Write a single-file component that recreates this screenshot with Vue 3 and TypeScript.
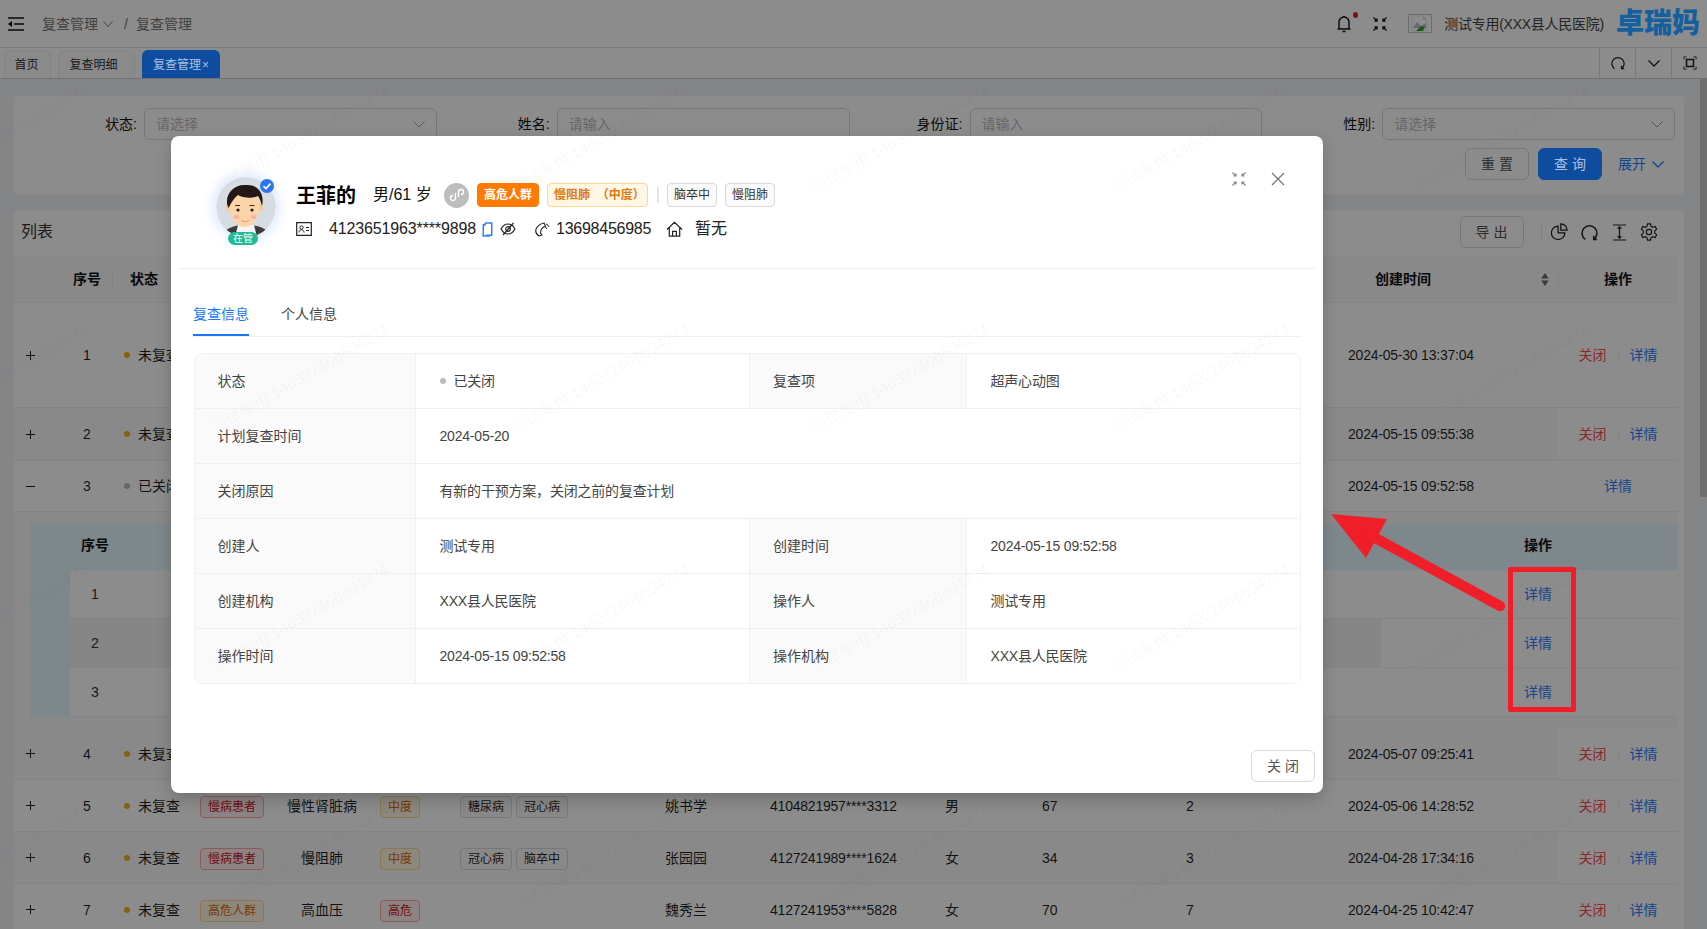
<script setup lang="ts">
import { computed } from 'vue'

interface Tag { text: string; kind: 'red' | 'orange' | 'plain' }
interface Row {
  no: number
  height: number
  status: string
  closed?: boolean
  group?: Tag
  disease?: string
  level?: Tag
  tags?: string[]
  name?: string
  idNo?: string
  gender?: string
  age?: string
  count?: string
  time: string
}

const chronic: Tag = { text: '慢病患者', kind: 'red' }
const highRisk: Tag = { text: '高危人群', kind: 'orange' }
const mid: Tag = { text: '中度', kind: 'orange' }
const high: Tag = { text: '高危', kind: 'red' }

const rows: Row[] = [
  { no: 1, height: 105, status: '未复查', time: '2024-05-30 13:37:04' },
  { no: 2, height: 53, status: '未复查', time: '2024-05-15 09:55:38' },
  { no: 3, height: 51, status: '已关闭', closed: true, time: '2024-05-15 09:52:58' },
  { no: 4, height: 52, status: '未复查', time: '2024-05-07 09:25:41' },
  { no: 5, height: 52, status: '未复查', group: chronic, disease: '慢性肾脏病', level: mid, tags: ['糖尿病', '冠心病'], name: '姚书学', idNo: '4104821957****3312', gender: '男', age: '67', count: '2', time: '2024-05-06 14:28:52' },
  { no: 6, height: 52, status: '未复查', group: chronic, disease: '慢阻肺', level: mid, tags: ['冠心病', '脑卒中'], name: '张园园', idNo: '4127241989****1624', gender: '女', age: '34', count: '3', time: '2024-04-28 17:34:16' },
  { no: 7, height: 52, status: '未复查', group: highRisk, disease: '高血压', level: high, tags: [], name: '魏秀兰', idNo: '4127241953****5828', gender: '女', age: '70', count: '7', time: '2024-04-25 10:42:47' },
]

const details = [
  { label: '状态', value: '已关闭', dot: true, label2: '复查项', value2: '超声心动图' },
  { label: '计划复查时间', value: '2024-05-20' },
  { label: '关闭原因', value: '有新的干预方案，关闭之前的复查计划' },
  { label: '创建人', value: '测试专用', label2: '创建时间', value2: '2024-05-15 09:52:58' },
  { label: '创建机构', value: 'XXX县人民医院', label2: '操作人', value2: '测试专用' },
  { label: '操作时间', value: '2024-05-15 09:52:58', label2: '操作机构', value2: 'XXX县人民医院' },
]

const marks = computed(() => {
  const list: { left: string; top: string }[] = []
  for (let m = 1; m < 5; m++) {
    for (let k = 0; k < 6; k++) {
      list.push({ left: `${-82 + 300 * k}px`, top: `${-62 + 240 * m}px` })
    }
  }
  return list
})
</script>

<template>
  <div class="screen">
    <header class="topbar">
      <svg class="menu-icon" viewBox="0 0 16 14" width="16" height="14">
        <path d="M0 1h16M6 7h10M0 13h16" stroke="currentColor" stroke-width="1.6" fill="none" />
        <path d="M4 4v6L0 7z" fill="currentColor" />
      </svg>
      <span class="crumb">复查管理</span>
      <svg class="crumb-arrow" viewBox="0 0 10 6" width="10" height="6"><path d="M.5.5 5 5.5 9.5.5" stroke="currentColor" fill="none" /></svg>
      <span class="crumb-sep">/</span>
      <span class="crumb">复查管理</span>

      <div class="top-right">
        <span class="bell">
          <svg viewBox="0 0 14 18" width="14" height="18"><path d="M2 14V7a5 5 0 0 1 10 0v7M.5 14h13M5.5 16.5h3M7 1v1" stroke="#111" stroke-width="1.4" fill="none" /></svg>
          <i class="bell-dot"></i>
        </span>
        <svg class="shrink-icon" viewBox="0 0 14 14" width="14" height="14">
          <path d="M.5.5 4 4M4 1.5V4H1.5M13.5.5 10 4M10 1.5V4h2.500M.5 13.500 4 10M4 12.500V10H1.500M13.500 13.500 10 10M10 12.500V10h2.500" stroke="#111" stroke-width="1.300" fill="none" />
        </svg>
        <svg class="user-pic" viewBox="0 0 24 19" width="24" height="19">
          <path d="M.5.5h23v18H.5z" fill="none" stroke="#c4c4c4" />
          <path d="M4 2h11l4 4v11H4z" fill="#fff" stroke="#e4e4e4" stroke-width=".8" />
          <path d="M5 13l4-5 4 4 5-3v5H5z" fill="#b7c4d6" />
          <path d="M15 2v4h4z" fill="#ddd" />
          <path d="M8 17l5-5 4 1-2 4z" fill="#3aa02c" />
        </svg>
        <span class="user-name">测试专用(XXX县人民医院)</span>
        <span class="logo over-mask">卓瑞妈</span>
      </div>
    </header>

    <nav class="tabbar">
      <span class="page-tab home">首页</span>
      <span class="page-tab wide">复查明细</span>
      <span class="page-tab current over-mask">复查管理<small>×</small></span>
      <div class="tab-tools">
        <span class="tool">
          <svg viewBox="0 0 16 16" width="14" height="14"><path d="M4 14.500A7 7 0 1 1 12 14.500M12 11v3.500H15" stroke="#222" stroke-width="1.400" fill="none" /></svg>
        </span>
        <span class="tool">
          <svg viewBox="0 0 12 7" width="12" height="7"><path d="M.5.5 6 6 11.500.5" stroke="#222" stroke-width="1.300" fill="none" /></svg>
        </span>
        <span class="tool">
          <svg viewBox="0 0 16 16" width="14" height="14"><path d="M1 4V1h3M12 1h3v3M15 12v3h-3M4 15H1v-3" stroke="#222" fill="none" /><path d="M4 4h8v8H4z" stroke="#222" stroke-width="1.800" fill="none" /></svg>
        </span>
      </div>
    </nav>

    <main class="content">
      <section class="filter-card">
        <div class="filter-grid">
          <label class="field"><span class="field-label">状态:</span>
            <span class="control">请选择<svg viewBox="0 0 12 7" width="12" height="7"><path d="M.5.5 6 6 11.500.5" stroke="#999" fill="none" /></svg></span>
          </label>
          <label class="field"><span class="field-label">姓名:</span><span class="control">请输入</span></label>
          <label class="field"><span class="field-label">身份证:</span><span class="control">请输入</span></label>
          <label class="field"><span class="field-label">性别:</span>
            <span class="control">请选择<svg viewBox="0 0 12 7" width="12" height="7"><path d="M.5.5 6 6 11.500.5" stroke="#999" fill="none" /></svg></span>
          </label>
        </div>
        <div class="filter-actions">
          <button class="btn">重 置</button>
          <button class="btn primary over-mask">查 询</button>
          <span class="expand-link">展开
            <svg viewBox="0 0 12 7" width="12" height="7"><path d="M.5.5 6 6 11.500.5" stroke="currentColor" stroke-width="1.400" fill="none" /></svg>
          </span>
        </div>
      </section>

      <section class="table-card">
        <div class="table-title">
          <h2>列表</h2>
          <div class="table-tools">
            <button class="btn">导 出</button>
            <i class="tool-sep"></i>
            <svg viewBox="0 0 20 20" width="18" height="18"><path d="M9 3.500A7.500 7.500 0 1 0 16.500 11H9z" stroke="#222" stroke-width="1.400" fill="none" /><path d="M12 1a7 7 0 0 1 7 7h-7z" stroke="#222" stroke-width="1.400" fill="none" /></svg>
            <svg viewBox="0 0 16 16" width="17" height="17"><path d="M4 14.500A7 7 0 1 1 12 14.500M12 11v3.500H15" stroke="#222" stroke-width="1.400" fill="none" /></svg>
            <svg viewBox="0 0 16 18" width="15" height="17"><path d="M1 1h14M1 17h14M8 3v12M6 5l2-2 2 2M6 13l2 2 2-2" stroke="#222" stroke-width="1.300" fill="none" /></svg>
            <svg viewBox="0 0 20 20" width="18" height="18"><path d="M8.300 1h3.400l.6 2.800 1.800 1 2.700-.9 1.700 3-2.100 1.900v2.400l2.100 1.900-1.700 3-2.700-.9-1.800 1-.6 2.800H8.300l-.6-2.800-1.800-1-2.700.9-1.700-3 2.100-1.900V8.800L1.500 6.900l1.700-3 2.700.9 1.800-1z" stroke="#222" stroke-width="1.300" fill="none" /><circle cx="10" cy="10" r="3" stroke="#222" stroke-width="1.300" fill="none" /></svg>
          </div>
        </div>

        <div class="grid-row head">
          <span></span>
          <span class="center sep-right">序号</span>
          <span class="status-head">状态</span>
          <span></span><span></span><span></span><span></span><span></span><span></span><span></span><span></span><span></span>
          <span class="time-head">创建时间
            <svg viewBox="0 0 8 14" width="8" height="13"><path d="M4 0 8 6H0zM4 14 0 8h8z" fill="#6a6a6a" /></svg>
          </span>
          <span class="center ops-head">操作</span>
        </div>

        <template v-for="row in rows" :key="row.no">
          <div class="grid-row" :class="{ zebra: row.no % 2 === 0 }" :style="{ height: row.height + 'px' }">
            <span class="expander">
              <svg viewBox="0 0 12 12" width="11" height="11"><path :d="row.closed ? 'M1 6h10' : 'M1 6h10M6 1v10'" stroke="#222" stroke-width="1.100" fill="none" /></svg>
            </span>
            <span class="center">{{ row.no }}</span>
            <span class="state"><i :class="{ off: row.closed }"></i>{{ row.status }}</span>
            <span class="center"><em v-if="row.group" class="tag" :class="row.group.kind">{{ row.group.text }}</em></span>
            <span class="center">{{ row.disease }}</span>
            <span class="center"><em v-if="row.level" class="tag" :class="row.level.kind">{{ row.level.text }}</em></span>
            <span class="tags"><em v-for="t in row.tags" :key="t" class="tag plain">{{ t }}</em></span>
            <span>{{ row.name }}</span>
            <span class="num">{{ row.idNo }}</span>
            <span>{{ row.gender }}</span>
            <span>{{ row.age }}</span>
            <span>{{ row.count }}</span>
            <span class="num">{{ row.time }}</span>
            <span class="ops">
              <template v-if="!row.closed"><a class="danger">关闭</a><i></i></template><a>详情</a>
            </span>
          </div>

          <div v-if="row.closed" class="expanded">
            <div class="sub-table">
              <div class="sub-row sub-head">
                <b>序号</b><span></span><span></span><b>操作</b><span></span>
              </div>
              <div v-for="n in 3" :key="n" class="sub-row" :class="{ shaded: n === 2 }">
                <span class="sub-no">{{ n }}</span><span class="sub-fill"></span><span></span><a>详情</a><span></span>
              </div>
            </div>
          </div>
        </template>
      </section>
    </main>

    <div class="scroll-thumb"></div>
    <div class="mask"></div>

    <section class="modal">
      <header class="modal-head">
        <div class="avatar">
          <svg viewBox="0 0 60 60" width="60" height="60">
            <defs><clipPath id="ava"><circle cx="30" cy="30" r="30" /></clipPath></defs>
            <g clip-path="url(#ava)">
              <circle cx="30" cy="30" r="30" fill="#d6dce1" />
              <path d="M6 60c2-9 12-12 24-12s22 3 24 12z" fill="#3c3c3c" />
              <path d="M19 60l3-12h16l3 12z" fill="#f4f4f4" />
              <ellipse cx="12.500" cy="30" rx="2.500" ry="4" fill="#f6c89b" />
              <ellipse cx="44.500" cy="30" rx="2.500" ry="4" fill="#f6c89b" />
              <path d="M13 26c0-9 7-13 15.500-13S44 17 44 26c0 13-7 24-15.500 24S13 39 13 26z" fill="#fbd5a8" />
              <path d="M12.500 31C7 19 17 7 30 8c11-1 19 8 16 21-1-4-2-7-4-10-6 3-15 2-20-1-4 3-7 8-9.500 13z" fill="#231815" />
              <circle cx="22" cy="33" r="1.600" fill="#231815" />
              <circle cx="36" cy="33" r="1.600" fill="#231815" />
              <path d="M19 28.500h5M33.500 28.500h5" stroke="#231815" stroke-width=".9" />
              <ellipse cx="20.500" cy="40" rx="3" ry="2" fill="#f6b3a6" />
              <ellipse cx="37.500" cy="40" rx="3" ry="2" fill="#f6b3a6" />
              <path d="M25 43.500q4 2.500 8 0" stroke="#e79a78" fill="none" />
            </g>
          </svg>
          <i class="verified">
            <svg viewBox="0 0 14 14" width="14" height="14"><circle cx="7" cy="7" r="7" fill="#2b74f2" /><path d="M3.500 7.200 6 9.600l4.500-5" stroke="#fff" stroke-width="1.600" fill="none" /></svg>
          </i>
          <span class="in-care">在管</span>
        </div>

        <div class="patient">
          <div class="patient-line">
            <strong class="patient-name">王菲的</strong>
            <span class="patient-age">男/61 岁</span>
            <span class="mini-badge">
              <svg viewBox="0 0 16 16" width="16" height="16"><path d="M6.500 6v5a2.500 2.500 0 1 1-2.500-2.500M9.500 10V5A2.500 2.500 0 1 1 12 7.500" stroke="#fff" stroke-width="1.400" fill="none" /></svg>
            </span>
            <em class="ptag solid">高危人群</em>
            <em class="ptag soft">慢阻肺&nbsp;&nbsp;（中度）</em>
            <i class="ptag-sep"></i>
            <em class="ptag plain">脑卒中</em>
            <em class="ptag plain">慢阻肺</em>
          </div>
          <div class="patient-line contact">
            <svg class="card-ico" viewBox="0 0 16 14" width="16" height="14"><path d="M.7.7h14.600v12.600H.7z" stroke="#222" stroke-width="1.200" fill="none" /><circle cx="5.500" cy="5.500" r="1.700" stroke="#222" fill="none" /><path d="M2.800 10.500c.4-2 1.500-2.800 2.700-2.800s2.300.8 2.700 2.800M10 5.500h3M10 8.500h3" stroke="#222" fill="none" /></svg>
            <span class="id-no">4123651963****9898</span>
            <svg class="copy-ico" viewBox="0 0 11 16" width="11" height="15"><path d="M3 1h7v13H4M3 1v2H1v12h7" stroke="#2f7ff5" stroke-width="1.600" fill="none" /></svg>
            <svg class="eye-ico" viewBox="0 0 16 14" width="16" height="14"><path d="M1 7c2-3.500 4.500-5 7-5s5 1.500 7 5c-2 3.500-4.500 5-7 5S3 10.500 1 7z" stroke="#222" stroke-width="1.200" fill="none" /><circle cx="8" cy="7" r="2.300" stroke="#222" stroke-width="1.200" fill="none" /><path d="M13.500 1 3 13" stroke="#222" stroke-width="1.200" /></svg>
            <svg class="phone-ico" viewBox="0 0 15 15" width="15" height="15"><path d="M4 14C1 12 0 9 1.500 6 3.500 3 6 1.500 9 1l1.500 3L8 5.500 6 8l-.5 3L7 13z" stroke="#222" stroke-width="1.100" fill="none" /><path d="M10 5c1 .3 1.700 1 2 2M11 2c1.500.5 2.500 1.500 3 3" stroke="#222" fill="none" /></svg>
            <span class="phone">13698456985</span>
            <svg class="home-ico" viewBox="0 0 18 16" width="17" height="16"><path d="M1 8.500 9 1l8 7.500M3.500 7v8.500h11V7M7 15.500V10.500h4v5" stroke="#222" stroke-width="1.300" fill="none" /></svg>
            <span class="addr">暂无</span>
          </div>
        </div>

        <div class="modal-tools">
          <svg viewBox="0 0 14 14" width="14" height="14"><path d="M.5.5 4 4M4 1.500V4H1.500M13.500.5 10 4M10 1.500V4h2.500M.5 13.500 4 10M4 12.500V10H1.500M13.500 13.500 10 10M10 12.500V10h2.500" stroke="#888" stroke-width="1.200" fill="none" /></svg>
          <svg viewBox="0 0 14 14" width="14" height="14"><path d="M1 1l12 12M13 1 1 13" stroke="#777" stroke-width="1.300" fill="none" /></svg>
        </div>
      </header>

      <div class="modal-tabs">
        <span class="modal-tab active">复查信息</span>
        <span class="modal-tab">个人信息</span>
      </div>

      <div class="desc">
        <template v-for="d in details" :key="d.label">
          <div class="desc-label">{{ d.label }}</div>
          <div class="desc-value" :class="{ full: !d.label2 }">
            <i v-if="d.dot" class="desc-dot"></i>{{ d.value }}
          </div>
          <template v-if="d.label2">
            <div class="desc-label">{{ d.label2 }}</div>
            <div class="desc-value">{{ d.value2 }}</div>
          </template>
        </template>
      </div>

      <footer class="modal-foot"><button class="btn">关 闭</button></footer>
    </section>

    <div class="note-box"></div>
    <svg class="note-arrow" viewBox="0 0 200 120" width="200" height="120">
      <path d="M11 9 67 14 46 53z" fill="#f01e29" />
      <path d="M48 29 180 101" stroke="#f01e29" stroke-width="10.500" stroke-linecap="round" />
    </svg>

    <div class="watermarks">
      <span v-for="(m, i) in marks" :key="i" class="mark" :style="m">测试专用 146332406604274</span>
    </div>
  </div>
</template>

<style>
html, body { margin: 0; background: #fff; }
</style>

<style scoped>
.screen {
  position: relative;
  width: 1707px;
  height: 929px;
  overflow: hidden;
  background: #f0f2f5;
  font: 14px/22px "Liberation Sans", "Noto Sans CJK SC", sans-serif;
  color: rgba(0, 0, 0, .88);
}
.over-mask { position: relative; z-index: 6; }

.topbar {
  height: 47px;
  display: flex;
  align-items: center;
  background: #fff;
  border-bottom: 1px solid #ddd;
  color: #777;
}
.menu-icon { margin-left: 8px; margin-right: 18px; color: #111; }
.crumb-arrow { margin: 0 0 0 5px; }
.crumb-sep { margin: 0 8px 0 11px; }
.top-right { margin-left: auto; display: flex; align-items: center; color: #444; }
.bell { position: relative; display: flex; margin-right: 22px; }
.bell-dot { position: absolute; right: -7px; top: -3px; width: 5px; height: 6px; border-radius: 50%; background: #d6252b; }
.shrink-icon { margin-right: 21px; }
.user-pic { margin-right: 12px; }
.user-name { margin-right: 12px; color: #444; letter-spacing: -.25px; }
.logo {
  width: 91px;
  font-size: 28px;
  font-weight: 900;
  line-height: 47px;
  color: #14609f;
}

.tabbar {
  height: 30px;
  display: flex;
  align-items: flex-end;
  gap: 7px;
  padding-left: 4px;
  background: #fff;
  border-bottom: 1px solid #ccc;
}
.page-tab {
  width: 47px;
  height: 28px;
  box-sizing: border-box;
  display: flex;
  align-items: center;
  justify-content: center;
  font-size: 12px;
  background: #fbfbfb;
  border: 1px solid #eee;
  border-bottom: 0;
  border-radius: 6px 6px 0 0;
  color: #333;
}
.page-tab.home { padding-right: 2px; }
.page-tab.wide { width: 77px; padding-right: 6px; }
.page-tab.current {
  width: 78px;
  background: #0e4c9f;
  border-color: #0e4c9f;
  color: #a9c2e2;
}
.page-tab small { font-size: 12px; margin-left: 1px; }
.tab-tools { margin-left: auto; display: flex; height: 100%; margin-right: 0; }
.tool {
  width: 36px;
  height: 30px;
  box-sizing: border-box;
  border-left: 1px solid #ddd;
  display: flex;
  align-items: center;
  justify-content: center;
}

.content {
  margin-left: 14px;
  width: 1670px;
  padding-top: 17px;
  display: flex;
  flex-direction: column;
  gap: 16px;
}
.filter-card {
  height: 98px;
  box-sizing: border-box;
  padding: 12px 9px 0 10px;
  background: #fff;
  border-radius: 4px;
}
.filter-grid { display: grid; grid-template-columns: repeat(4, 1fr); }
.field { display: flex; align-items: center; color: #111; }
.field-label { width: 120px; box-sizing: border-box; padding-right: 7px; text-align: right; }
.control {
  flex: 1;
  height: 32px;
  box-sizing: border-box;
  padding: 0 11px;
  display: flex;
  align-items: center;
  justify-content: space-between;
  background: #fff;
  border: 1px solid #d9d9d9;
  border-radius: 6px;
  color: #bbb;
}
.filter-actions {
  margin-top: 8px;
  padding-right: 8px;
  display: flex;
  align-items: center;
  justify-content: flex-end;
}
.btn {
  width: 64px;
  height: 32px;
  padding: 0;
  font: inherit;
  background: #fff;
  border: 1px solid #d9d9d9;
  border-radius: 6px;
  color: #555;
}
.btn.primary {
  margin-left: 9px;
  background: #0e4c9f;
  border-color: #0e4c9f;
  color: #a9c2e2;
}
.expand-link { margin-left: 16px; width: 49px; display: flex; align-items: center; gap: 6px; white-space: nowrap; color: #2a7fff; }

.table-card { background: #fff; border-radius: 4px; }
.table-title {
  height: 46px;
  display: flex;
  align-items: center;
  justify-content: space-between;
  box-sizing: border-box;
  padding: 0 26px 2px 7px;
}
.table-title h2 { margin: 0; font-size: 16px; font-weight: 400; color: #333; }
.table-tools { display: flex; align-items: center; gap: 13.500px; }
.tool-sep { width: 1px; height: 14px; margin: 0 -5.500px 0 3.500px; background: #e8e8e8; }

.grid-row {
  width: 1664px;
  display: grid;
  grid-template-columns: 36px 74px 72px 72px 108px 48px 241px 105px 175px 97px 144px 162px 210px 120px;
  align-items: center;
  box-sizing: border-box;
  border-bottom: 1px solid #f0f0f0;
  background: #fff;
}
.grid-row.zebra { background: #fafafa; }
.grid-row.head { height: 47px; background: #fafafa; font-weight: 700; color: #111; }
.center { text-align: center; }
.sep-right { position: relative; }
.sep-right::after { content: ""; position: absolute; right: 11px; top: 0; height: 22px; width: 1px; background: #eee; }
.status-head { padding-left: 6px; }
.time-head { position: relative; padding-left: 27px; }
.time-head svg { position: absolute; right: 9px; top: 5px; }
.ops-head { position: relative; }
.ops-head::before { content: ""; position: absolute; left: 0; top: 0; height: 22px; width: 1px; background: #eee; }
.expander { padding-right: 4px; height: 16px; display: flex; align-items: center; justify-content: center; }
.state { display: flex; align-items: center; gap: 8px; white-space: nowrap; }
.state i { width: 6px; height: 6px; border-radius: 50%; background: #faad14; }
.state i.off { background: #bbb; }
.num { letter-spacing: -.22px; }
.tag {
  display: inline-block;
  height: 22px;
  box-sizing: border-box;
  margin-top: 3px;
  padding: 0 7px;
  font: 12px/20px "Liberation Sans", "Noto Sans CJK SC", sans-serif;
  border: 1px solid;
  border-radius: 4px;
}
.tag.red { color: #cf1322; background: #fff1f0; border-color: #ffa39e; }
.tag.orange { color: #d46b08; background: #fff7e6; border-color: #ffd591; }
.tag.plain { color: rgba(0, 0, 0, .88); background: #fafafa; border-color: #d9d9d9; }
.tags { display: flex; gap: 4px; padding-left: 36px; }
.ops { height: 100%; display: flex; align-items: center; justify-content: center; background: #fff; }
.ops a { color: #2a7fff; }
.ops a.danger { color: #ff4d4f; }
.ops i { width: 1px; height: 12px; margin: 0 11px; background: #eee; }

.expanded {
  width: 1664px;
  height: 216px;
  box-sizing: border-box;
  padding: 11px 0 0 16px;
  background: #fafafa;
}
.sub-row {
  height: 49px;
  display: grid;
  grid-template-columns: 50px 1261px 117px 80px 100px;
  align-items: center;
  margin-left: 40px;
  background: #fff;
  border-bottom: 1px solid #f0f0f0;
  box-sizing: border-box;
}
.sub-table { background: #e6f7ff; width: 1648px; height: 194px; }
.sub-head { height: 47px; margin-left: 0; padding-bottom: 3px; grid-template-columns: 90px 1261px 117px 80px 100px; background: #e6f7ff; border: 0; }
.sub-head b { text-align: center; color: #111; }
.sub-head b:first-child { padding-left: 40px; }
.sub-no { text-align: center; color: #333; }
.sub-row > a { text-align: center; color: #2a7fff; }
.shaded .sub-no, .shaded .sub-fill { background: #f5f5f5; height: 100%; display: flex; align-items: center; justify-content: center; }

.scroll-thumb {
  position: absolute;
  left: 1700px;
  top: 79px;
  width: 7px;
  height: 418px;
  background: #c9c9c9;
}
.mask { position: absolute; inset: 0; z-index: 5; background: rgba(0, 0, 0, .45); }

.modal {
  position: absolute;
  left: 171px;
  top: 136px;
  z-index: 20;
  width: 1152px;
  height: 657px;
  display: flex;
  flex-direction: column;
  box-sizing: border-box;
  background: #fff;
  border-radius: 8px;
  box-shadow: 0 6px 16px rgba(0, 0, 0, .2);
}
.modal-head {
  height: 133px;
  margin: 0 8px;
  padding: 41px 30px 0 37px;
  display: flex;
  align-items: flex-start;
  box-sizing: border-box;
  border-bottom: 1px solid #f0f0f0;
}
.avatar { position: relative; width: 60px; height: 60px; flex: none; border-radius: 50%; box-shadow: 0 0 12px 3px rgba(60, 130, 255, .2); }
.avatar > svg { display: block; }
.verified { position: absolute; right: 2px; top: 2px; display: flex; }
.in-care {
  position: absolute;
  left: 12px;
  top: 55px;
  width: 30px;
  height: 13px;
  font-size: 10px;
  line-height: 13px;
  text-align: center;
  color: #fff;
  background: #1fbb95;
  border-radius: 7px;
}
.patient { margin-left: 20px; padding-top: 6px; }
.patient-line { height: 24px; display: flex; align-items: center; }
.contact { margin-top: 10px; font-size: 15px; color: #222; }
.patient-name { width: 77px; margin-top: 2px; font-size: 20px; color: #000; }
.patient-age { width: 71px; font-size: 16px; color: #111; }
.mini-badge {
  width: 25px;
  height: 25px;
  margin-right: 8px;
  display: flex;
  align-items: center;
  justify-content: center;
  background: #bdbdbd;
  border-radius: 50%;
}
.ptag {
  height: 24px;
  box-sizing: border-box;
  padding: 0 6px;
  font: 12px/22px "Liberation Sans", "Noto Sans CJK SC", sans-serif;
  border: 1px solid;
  border-radius: 4px;
  white-space: nowrap;
}
.ptag.solid { width: 62px; padding: 0 6px; margin-right: 8px; font-weight: 700; color: #fff; background: #ff7a00; border-color: #ff7a00; }
.ptag.soft { width: 101px; margin-right: 9px; font-weight: 700; color: #dd7a10; background: #fff7e6; border-color: #ffd591; }
.ptag.plain { margin-right: 8px; color: #333; background: #fafafa; border-color: #d9d9d9; }
.ptag-sep { width: 2px; height: 16px; margin-right: 8px; background: #e4e4e4; }
.id-no { margin-left: 17px; width: 150px; font-size: 16px; letter-spacing: -.14px; white-space: nowrap; }
.copy-ico { margin-left: 3px; }
.eye-ico { margin-left: 7px; }
.phone-ico { margin-left: 19px; }
.phone { margin-left: 6px; width: 95px; font-size: 16px; letter-spacing: -.25px; }
.home-ico { margin-left: 15px; }
.addr { margin-left: 12px; font-size: 16px; }
.modal-tools { margin-left: auto; margin-top: -5px; display: flex; gap: 25px; }

.modal-tabs {
  margin: 0 22px;
  height: 68px;
  display: flex;
  align-items: flex-end;
  gap: 32px;
  box-sizing: border-box;
  border-bottom: 1px solid #f0f0f0;
}
.modal-tab { height: 33px; box-sizing: border-box; color: #444; }
.modal-tab.active { color: #1677ff; border-bottom: 2px solid #1677ff; }

.desc {
  margin: 16px 22px 0 22.500px;
  display: grid;
  grid-template-columns: 221px 334.500px 216.500px 1fr;
  grid-auto-rows: 55px;
  overflow: hidden;
  border: 1px solid #f0f0f0;
  border-bottom: 0;
  border-radius: 8px;
  color: #444;
}
.desc-label, .desc-value {
  display: flex;
  align-items: center;
  box-sizing: border-box;
  border-bottom: 1px solid #f0f0f0;
}
.desc-label { padding-left: 23px; background: #fafafa; border-right: 1px solid #f0f0f0; }
.desc-value { padding-left: 24px; border-right: 1px solid #f0f0f0; letter-spacing: -.2px; }
.desc-value:nth-child(4n), .desc-value.full { border-right: 0; }
.desc-value.full { grid-column: span 3; }
.desc-dot { width: 6px; height: 6px; margin-right: 8px; border-radius: 50%; background: #bbb; }
.modal-foot { margin-top: auto; padding: 0 8px 11px 0; display: flex; justify-content: flex-end; }

.note-box {
  position: absolute;
  left: 1508px;
  top: 567px;
  z-index: 25;
  width: 68px;
  height: 145px;
  box-sizing: border-box;
  border: 5px solid #f01e29;
  border-radius: 2px;
}
.note-arrow { position: absolute; left: 1320px; top: 505px; z-index: 25; }

.watermarks { position: absolute; inset: 0; z-index: 30; pointer-events: none; }
.mark {
  position: absolute;
  font-size: 16px;
  line-height: 20px;
  white-space: nowrap;
  color: rgba(0, 0, 0, .04);
  transform-origin: left bottom;
  transform: rotate(-30deg);
}
</style>
